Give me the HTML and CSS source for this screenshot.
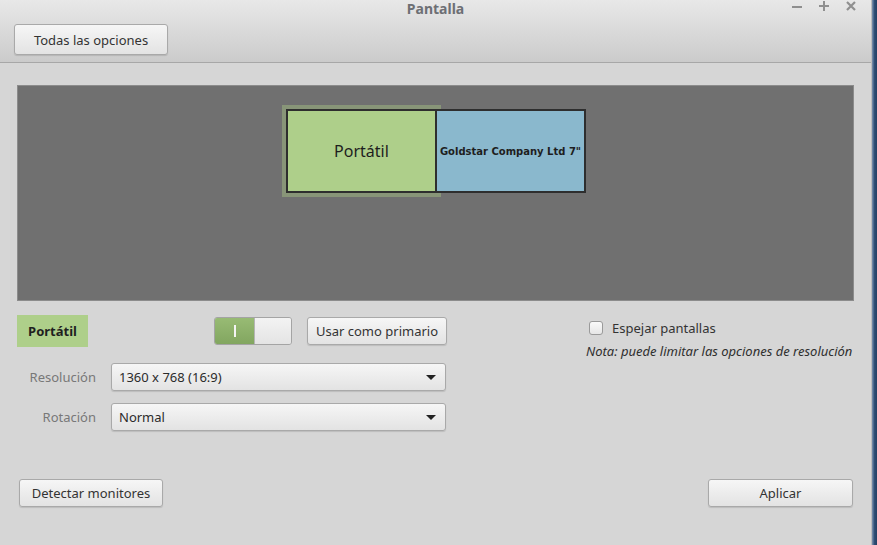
FILE: index.html
```html
<!DOCTYPE html>
<html lang="es">
<head>
<meta charset="utf-8">
<title>Pantalla</title>
<link rel="stylesheet" href="styles.css">
</head>
<body>
<div class="screen">
  <div class="window">
    <header class="titlebar">
      <div class="title-row">
        <span></span>
        <span class="title">Pantalla</span>
        <div class="wm-buttons">
          <svg class="wm" width="12" height="12" viewBox="0 0 12 12"><path d="M1 7h10" stroke="#8f8f8f" stroke-width="2"/></svg>
          <svg class="wm" width="12" height="12" viewBox="0 0 12 12"><path d="M1 6h10M6 1v10" stroke="#8f8f8f" stroke-width="2"/></svg>
          <svg class="wm" width="12" height="12" viewBox="0 0 12 12"><path d="M2 2l8 8M10 2l-8 8" stroke="#8f8f8f" stroke-width="2.2"/></svg>
        </div>
      </div>
      <button class="btn btn-all">Todas las opciones</button>
    </header>

    <main class="content">
      <div class="canvas">
        <div class="monitor monitor-laptop">Portátil</div>
        <div class="monitor monitor-ext">Goldstar Company Ltd 7"</div>
      </div>

      <section class="settings">
        <div class="left">
          <div class="row-top">
            <div class="name-tag">Portátil</div>
            <div class="row-top-actions">
              <div class="switch">
                <span class="switch-on"><span class="switch-mark"></span></span>
                <span class="switch-off"></span>
              </div>
              <button class="btn btn-primary">Usar como primario</button>
            </div>
          </div>
          <div class="form-grid">
            <span class="field-label">Resolución</span>
            <div class="combo"><span>1360 x 768 (16:9)</span><span class="arrow"></span></div>
            <span class="field-label">Rotación</span>
            <div class="combo"><span>Normal</span><span class="arrow"></span></div>
          </div>
        </div>
        <div class="right">
          <label class="check-row"><span class="checkbox"></span><span>Espejar pantallas</span></label>
          <p class="note">Nota: puede limitar las opciones de resolución</p>
        </div>
      </section>

      <footer class="footer">
        <button class="btn btn-detect">Detectar monitores</button>
        <button class="btn btn-apply">Aplicar</button>
      </footer>
    </main>
  </div>
  <div class="desktop-edge"></div>
</div>
</body>
</html>
```

FILE: styles.css
```css
html, body {
  margin: 0;
  padding: 0;
}

body {
  width: 877px;
  height: 545px;
  overflow: hidden;
  font-family: "Noto Sans", "DejaVu Sans", sans-serif;
  font-size: 13px;
  color: #333333;
}

.screen {
  display: flex;
  height: 545px;
}

.window {
  width: 871px;
  flex-shrink: 0;
  background: #d6d6d6;
  border-right: 1px solid #bdbdbd;
  display: flex;
  flex-direction: column;
}

.desktop-edge {
  flex: 1;
  background: linear-gradient(to right, #7d93b0, #2f4e75 50%, #233f63);
}

/* Title bar */
.titlebar {
  height: 62px;
  background: linear-gradient(#e8e8e8, #cbcbcb);
  border-bottom: 1px solid #a7a7a7;
  box-sizing: content-box;
}

.title-row {
  display: grid;
  grid-template-columns: 1fr auto 1fr;
  align-items: center;
  height: 17px;
}

.title {
  font-weight: bold;
  font-size: 14px;
  color: #6d6f74;
  line-height: 17px;
}

.wm-buttons {
  display: flex;
  justify-content: flex-end;
  align-items: flex-start;
  gap: 15px;
  padding-right: 14px;
  height: 17px;
}

.wm {
  display: block;
}

/* Buttons */
.btn {
  font-family: "Noto Sans", "DejaVu Sans", sans-serif;
  font-size: 13px;
  color: #333333;
  background: linear-gradient(#f6f6f6, #e3e3e3);
  border: 1px solid #a9a9a9;
  border-radius: 3px;
  box-shadow: 0 1px 1px rgba(0, 0, 0, 0.12);
  padding: 0;
  height: 28px;
  cursor: default;
}

.btn-all {
  margin: 7px 0 0 14px;
  width: 154px;
  height: 31px;
}

/* Content */
.content {
  padding: 22px 17px 0 17px;
  display: flex;
  flex-direction: column;
}

.canvas {
  position: relative;
  height: 216px;
  background: #707070;
  border: 1px solid #8c8c8c;
  box-sizing: border-box;
}

.monitor {
  position: absolute;
  top: 23px;
  height: 84px;
  box-sizing: border-box;
  border: 2px solid #2e2e2e;
  display: flex;
  align-items: center;
  justify-content: center;
  color: #1e1e1e;
}

.monitor-laptop {
  left: 268px;
  width: 151px;
  background: #aecf8a;
  font-size: 16px;
  box-shadow: 0 0 0 4px rgba(170, 200, 130, 0.42);
}

.monitor-ext {
  left: 417px;
  width: 151px;
  background: #8ab8cd;
  font-family: "DejaVu Sans", sans-serif;
  font-weight: bold;
  font-size: 10px;
  white-space: nowrap;
  z-index: 1;
}

/* Settings */
.settings {
  display: flex;
  justify-content: space-between;
  margin-top: 14px;
}

.left {
  width: 430px;
}

.row-top {
  display: flex;
  justify-content: space-between;
  align-items: center;
  height: 32px;
}

.name-tag {
  width: 71px;
  height: 32px;
  background: #aecf8a;
  font-weight: bold;
  font-size: 13px;
  display: flex;
  align-items: center;
  justify-content: center;
  color: #1f1f1f;
}

.row-top-actions {
  display: flex;
  gap: 15px;
  align-items: center;
}

.switch {
  display: flex;
  width: 78px;
  height: 28px;
  box-sizing: border-box;
  border: 1px solid #a4a4a4;
  border-radius: 3px;
  overflow: hidden;
}

.switch-on {
  width: 39px;
  background: linear-gradient(#98bb74, #82a660);
  display: flex;
  align-items: center;
  justify-content: center;
}

.switch-mark {
  width: 2px;
  height: 12px;
  background: #f4f4f4;
}

.switch-off {
  flex: 1;
  background: linear-gradient(#f3f3f3, #e4e4e4);
  border-left: 1px solid #b5b5b5;
}

.btn-primary {
  width: 140px;
}

.form-grid {
  display: grid;
  grid-template-columns: 79px 335px;
  column-gap: 15px;
  row-gap: 12px;
  margin-top: 16px;
  align-items: center;
}

.field-label {
  text-align: right;
  color: #787878;
}

.combo {
  height: 28px;
  box-sizing: border-box;
  background: linear-gradient(#f6f6f6, #e3e3e3);
  border: 1px solid #a9a9a9;
  border-radius: 3px;
  box-shadow: 0 1px 1px rgba(0, 0, 0, 0.12);
  display: flex;
  align-items: center;
  justify-content: space-between;
  padding: 0 9px 0 7px;
  color: #2b2b2b;
}

.arrow {
  width: 0;
  height: 0;
  border-left: 5px solid transparent;
  border-right: 5px solid transparent;
  border-top: 5px solid #222222;
}

.right {
  width: 268px;
  padding-top: 6px;
}

.check-row {
  display: flex;
  align-items: center;
  gap: 9px;
  margin-left: 3px;
  height: 14px;
}

.checkbox {
  width: 14px;
  height: 14px;
  box-sizing: border-box;
  border: 1px solid #9a9a9a;
  border-radius: 3px;
  background: linear-gradient(#fafafa, #e6e6e6);
}

.note {
  margin: 8px 0 0 0;
  font-style: italic;
  font-size: 13px;
  line-height: 16px;
  color: #2f2f2f;
  white-space: nowrap;
}

/* Footer */
.footer {
  display: flex;
  justify-content: space-between;
  margin-top: 48px;
  padding-left: 2px;
}

.btn-detect {
  width: 144px;
}

.btn-apply {
  width: 145px;
  margin-right: 1px;
}
```
